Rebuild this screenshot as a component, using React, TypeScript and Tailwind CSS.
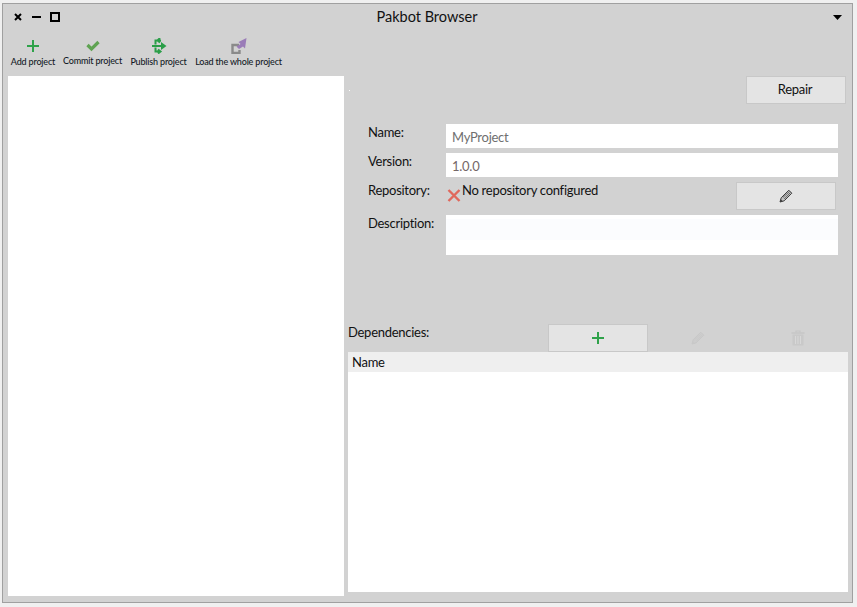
const font = { fontFamily: 'Lato, sans-serif' };

function Plus({ size = 14 }: { size?: number }) {
  return (
    <svg width={size} height={size} viewBox="0 0 14 14">
      <path d="M7 1v12M1 7h12" stroke="#2fa24a" strokeWidth="2" fill="none" />
    </svg>
  );
}

function Check() {
  return (
    <svg width="14" height="12" viewBox="0 0 14 12">
      <path d="M1.5 5 L5.5 9 L12.5 2" stroke="#5fa352" strokeWidth="3.2" fill="none" />
    </svg>
  );
}

function Publish() {
  return (
    <svg width="16" height="16" viewBox="0 0 16 16">
      <path d="M1 8h9" stroke="#2a9e48" strokeWidth="2" />
      <path d="M10 4 L15.5 8 L10 12Z" fill="#2a9e48" />
      <path d="M4.5 6.5 V2.5 H10 M9 0 L6.5 2.5 L9 4.5" stroke="#2a9e48" strokeWidth="2" fill="none" />
      <path d="M4.5 9.5 V13.5 H10 M7 11.5 L9.5 13.5 L7 15.5" stroke="#2a9e48" strokeWidth="2" fill="none" />
    </svg>
  );
}

function LoadIcon() {
  return (
    <svg width="16" height="16" viewBox="0 0 16 16">
      <path d="M8 7H1.5V15H8.5V12" stroke="#8a8a8a" strokeWidth="2.4" fill="none" />
      <path d="M15.5 0 L14 10.5 L12 8.5 L8 11 L5.5 8.5 L9.5 6 L7.5 4Z" fill="#9a7cb8" />
    </svg>
  );
}

function Pencil({ color = "#3c3c3c", fill = "#c4c4c4" }: { color?: string; fill?: string }) {
  return (
    <svg width="14" height="14" viewBox="0 0 14 14">
      <path d="M1 13 L2.2 8.8 L9.8 1.2 L12.8 4.2 L5.2 11.8Z" fill={fill} stroke={color} strokeWidth="1" strokeLinejoin="round" />
      <path d="M3.8 8.6 L10.5 2.5 M5.2 10 L11.5 3.5" stroke={color} strokeWidth="0.7" />
      <path d="M1 13 L1.8 10.2 L3.8 12.2Z" fill={color} />
    </svg>
  );
}

function Trash() {
  return (
    <svg width="14" height="16" viewBox="0 0 14 16">
      <path d="M0.5 3h13" stroke="#c6c6c6" strokeWidth="1.4" />
      <path d="M5 2.5V1h4v1.5" stroke="#c6c6c6" strokeWidth="1.2" fill="none" />
      <path d="M1.5 4.5h11V15.5h-11Z" fill="#c9c9c9" />
      <path d="M4.5 6v8M7 6v8M9.5 6v8" stroke="#d8d8d8" strokeWidth="1" />
    </svg>
  );
}

function ToolItem({ label, icon, width, raised }: { label: string; icon: React.ReactNode; width: string; raised?: boolean }) {
  return (
    <div className={`flex flex-col items-center ${width}`}>
      <div className="h-[16px] flex items-center justify-center">{icon}</div>
      <div className={`text-[9px] tracking-[-0.18px] leading-[14px] text-[#141a26] whitespace-nowrap font-medium ${raised ? "mt-0" : "mt-[1px]"}`}>{label}</div>
    </div>
  );
}

function Button({ children, width = "w-[100px]", height = "h-[28px]" }: { children: React.ReactNode; width?: string; height?: string }) {
  return (
    <div className={`${width} ${height} flex items-center justify-center pb-[1px] bg-[#e4e4e4] border border-[#c8c8c8] text-[13px] text-[#111111]`}>
      {children}
    </div>
  );
}

export default function App() {
  return (
    <div className="w-[857px] h-[607px] bg-[#f0f0f0] pt-[3px] pl-[2px] overflow-hidden tracking-[-0.27px]" style={font}>
      <div className="relative w-[851px] h-[600px] bg-[#d2d2d2] border border-[#a0a0a0] flex flex-col">
        <div className="h-[26px] flex items-center pl-[11px] pr-[10px] relative">
          <svg width="8" height="8" viewBox="0 0 8 8">
            <path d="M1 1l6 6M7 1l-6 6" stroke="#000" strokeWidth="2" />
          </svg>
          <div className="w-[9px] h-[2px] bg-black ml-[10px]" />
          <div className="w-[10px] h-[10px] border-2 border-black ml-[9px]" />
          <div className="flex-1 text-center text-[14.5px] tracking-normal text-[#111111] pr-[39px]">Pakbot Browser</div>
          <svg width="9" height="5" viewBox="0 0 9 5">
            <path d="M0 0h9L4.5 5Z" fill="#000" />
          </svg>
        </div>
        <div className="h-[46px] flex pl-[8px] pt-[8px] gap-[8px] items-start">
          <ToolItem label="Add project" width="w-[44px]" icon={<Plus />} />
          <ToolItem label="Commit project" width="w-[59px]" raised icon={<Check />} />
          <ToolItem label="Publish project" width="w-[57px]" icon={<Publish />} />
          <ToolItem label="Load the whole project" width="w-[87px]" icon={<LoadIcon />} />
        </div>
        <div className="flex-1 flex pl-[5px] gap-[4px] pb-[6px]">
          <div className="w-[336px] bg-white" />
          <div className="w-[500px] flex flex-col">
            <div className="flex justify-end pr-[2px] h-[48px] items-start">
              <Button height="h-[28px]"><span className="pr-[2px]">Repair</span></Button>
            </div>
            <div className="flex flex-col pl-[20px] pr-[10px] gap-[5px]">
              <Row label="Name:"><Field text="MyProject" color="text-[#6f6f6f]" /></Row>
              <Row label="Version:"><Field text="1.0.0" color="text-[#756767]" /></Row>
              <div className="flex h-[28px] text-[13px] text-[#111111]">
                <div className="w-[78px] leading-[17px]">Repository:</div>
                <div className="flex-1 flex items-start">
                  <svg className="mt-[7px] ml-[1px]" width="14" height="13" viewBox="0 0 14 13">
                    <path d="M1.5 1l11 11M12.5 1l-11 11" stroke="#e0685c" strokeWidth="2.4" />
                  </svg>
                  <span className="ml-[1px] leading-[17px]">No repository configured</span>
                </div>
                <div className="mr-[2px]"><Button><Pencil /></Button></div>
              </div>
              <div className="flex">
                <div className="w-[78px] text-[13px] leading-[17px] text-[#111111]">Description:</div>
                <div className="flex-1 h-[40px] bg-[linear-gradient(#ffffff_0,#ffffff_4px,#fbfcfe_4px,#fbfcfe_25px,#ffffff_25px)]" />
              </div>
            </div>
            <div className="flex mt-[69px] h-[28px] text-[13px] text-[#111111]">
              <div className="w-[200px] leading-[17px]">Dependencies:</div>
              <Button><Plus /></Button>
              <div className="w-[100px] flex items-center justify-center"><Pencil color="#c8c8c8" fill="#cdcdcd" /></div>
              <div className="w-[100px] flex items-center justify-center"><Trash /></div>
            </div>
            <div className="h-[240px] flex-1 bg-white flex flex-col mb-[4px]">
              <div className="h-[20px] bg-[#efefef] pl-[4px] text-[13px] leading-[20px] text-[#111111]">Name</div>
            </div>
          </div>
        </div>
        <div className="absolute left-[346px] top-[86px] w-[1px] h-[1px] bg-white" />
      </div>
    </div>
  );
}

function Row({ label, children }: { label: string; children: React.ReactNode }) {
  return (
    <div className="flex h-[24px]">
      <div className="w-[78px] text-[13px] leading-[17px] text-[#111111]">{label}</div>
      {children}
    </div>
  );
}

function Field({ text, color }: { text: string; color: string }) {
  return <div className={`flex-1 bg-white pl-[6px] text-[13px] leading-[26px] ${color}`}>{text}</div>;
}
